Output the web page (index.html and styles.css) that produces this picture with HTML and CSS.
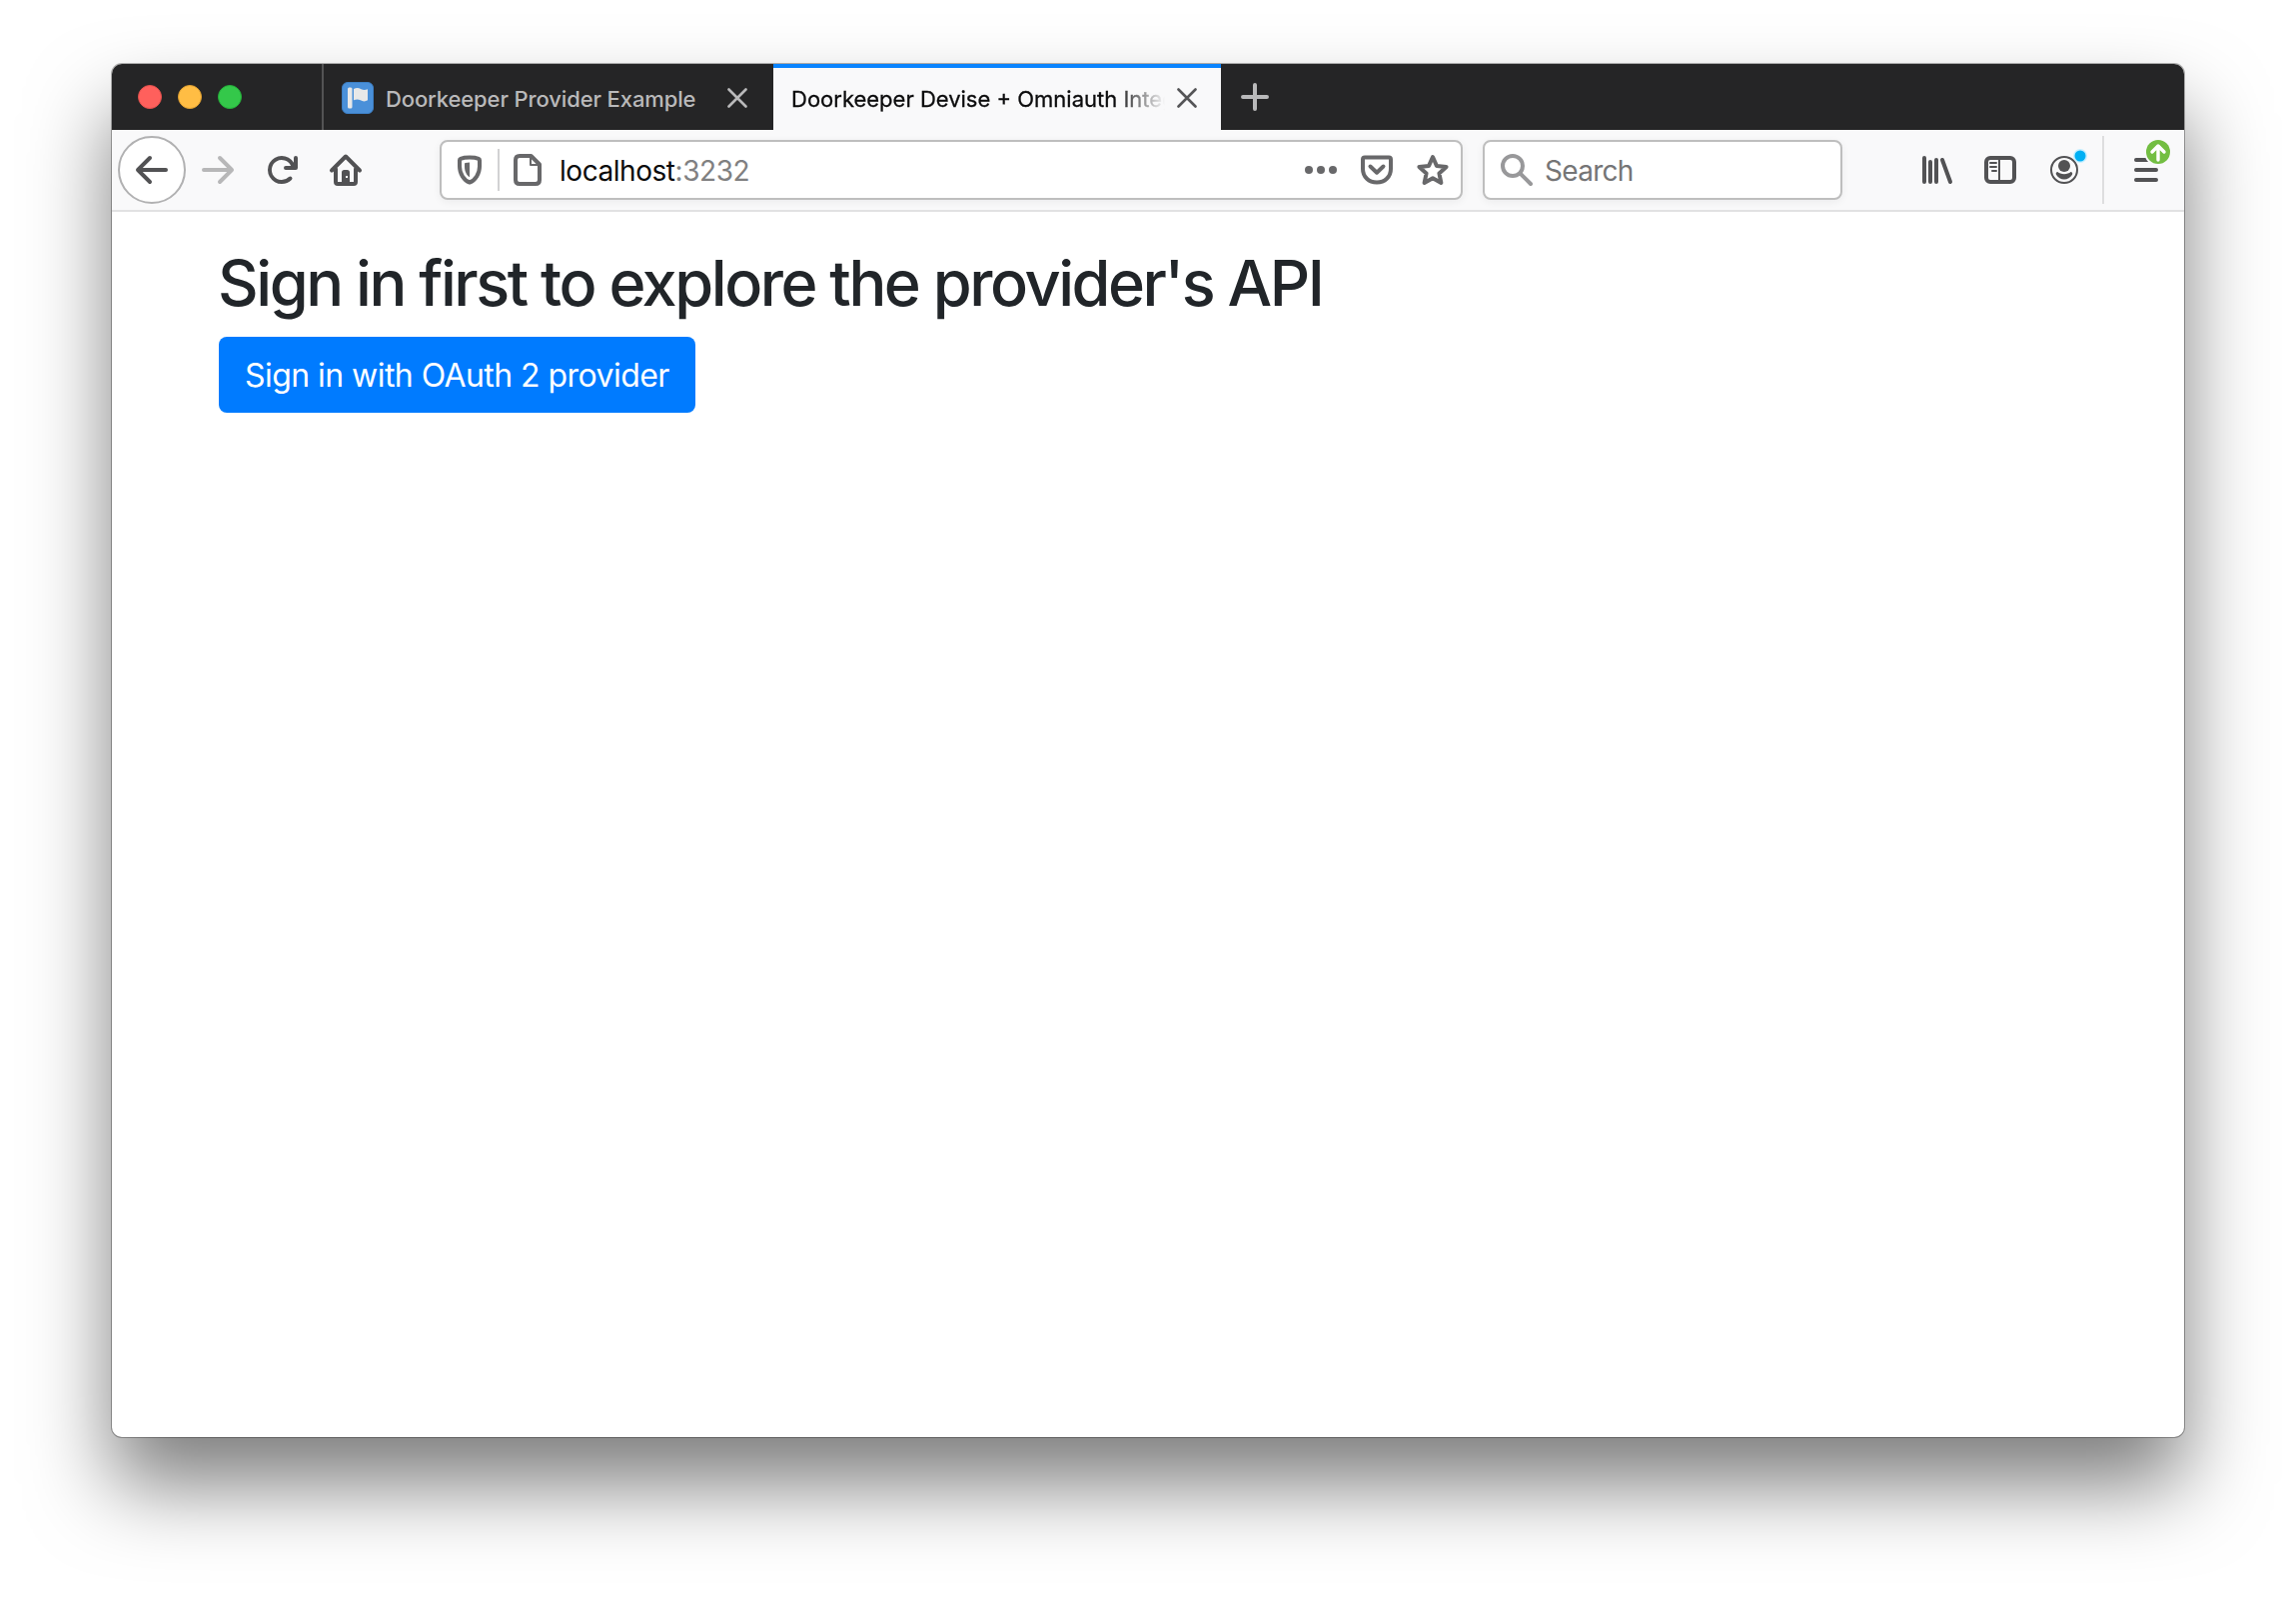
FILE: index.html
```html
<!DOCTYPE html>
<html lang="en">
<head>
<meta charset="utf-8">
<title>Doorkeeper Devise + Omniauth Integration</title>
<link rel="stylesheet" href="styles.css">
</head>
<body>
<div class="window">
  <div class="tabbar">
    <div class="lights"><span class="light red"></span><span class="light yellow"></span><span class="light green"></span></div>
    <div class="tab">
      <svg class="icon favicon" viewBox="0 0 32 32"><rect x=".5" y=".5" width="31" height="31" rx="5.5" fill="#4a90d9" stroke="#3d7fc4"/><rect x="6" y="5.500" width="4.500" height="21" rx="1.500" fill="#e8e8e8"/><path d="M12 7c3-1.500 5-1 7.500.3 2.300 1.200 4.300.9 6.500 0v11c-2.500 1.600-5 1.300-7.200 0-2.300-1.200-4.500-1-6.800 0z" fill="#e8e8e8"/></svg>
      <span class="tab-title">Doorkeeper Provider Example</span>
      <svg class="close" viewBox="0 0 20 20"><path d="M1.500 1.500l17 17M18.500 1.500l-17 17"/></svg>
    </div>
    <div class="tab active">
      <span class="tab-title">Doorkeeper Devise + Omniauth Integration</span>
      <svg class="close" viewBox="0 0 20 20"><path d="M1.500 1.500l17 17M18.500 1.500l-17 17"/></svg>
    </div>
    <svg class="plus" viewBox="0 0 28 28"><path d="M14 2v24M2 14h24"/></svg>
  </div>

  <div class="toolbar">
    <div class="back"><svg class="icon" viewBox="0 0 16 16"><path d="M15 7H3.414l4.293-4.293a1 1 0 0 0-1.414-1.414l-6 6a1 1 0 0 0 0 1.414l6 6a1 1 0 0 0 1.414-1.414L3.414 9H15a1 1 0 0 0 0-2z"/></svg></div>
    <svg class="icon forward" viewBox="0 0 16 16"><path d="M1 9h11.586l-4.293 4.293a1 1 0 0 0 1.414 1.414l6-6a1 1 0 0 0 0-1.414l-6-6a1 1 0 0 0-1.414 1.414L12.586 7H1a1 1 0 0 0 0 2z"/></svg>
    <svg class="icon reload" viewBox="0 0 16 16"><path d="M15 1a1 1 0 0 0-1 1v2.418A6.995 6.995 0 1 0 8 15a6.954 6.954 0 0 0 4.950-2.050 1 1 0 0 0-1.414-1.414A5.019 5.019 0 1 1 12.549 6H10a1 1 0 0 0 0 2h5a1 1 0 0 0 1-1V2a1 1 0 0 0-1-1z"/></svg>
    <svg class="icon home" viewBox="0 0 32 32"><path class="line" d="M2 16.500L16 2.500l14 14M6 15v13q0 2 2 2h16q2 0 2-2V15"/><path fill-rule="evenodd" d="M12 29V18.500q0-2.500 2.500-2.500h3q2.500 0 2.500 2.500V29zM16 22v2h2v-2z"/></svg>

    <div class="urlbar">
      <svg class="icon shield" viewBox="0 0 32 32"><path class="line" d="M16 3.500c3.500 0 7 .5 9 1.300q1 .4 1 1.500v6.200c0 7.500-4.500 14-10 16-5.500-2-10-8.500-10-16V6.300q0-1.100 1-1.500c2-.8 5.500-1.300 9-1.300z"/><path d="M16 8.500v14.800c-3-1.800-5-6-5-10.300V9.800q0-.7.700-.9z"/></svg>
      <span class="divider"></span>
      <svg class="icon page" viewBox="0 0 32 32"><path class="line" d="M8 2h11.500L28 10.500V26q0 4-4 4H8q-4 0-4-4V6q0-4 4-4z"/><path class="thin" d="M19 2v9h9"/></svg>
      <span class="url">localhost<span class="port">:3232</span></span>
      <span class="actions">
        <svg class="icon" viewBox="0 0 32 32"><circle cx="4" cy="16" r="4"/><circle cx="16" cy="16" r="4"/><circle cx="28" cy="16" r="4"/></svg>
        <svg class="icon" viewBox="0 0 32 32"><path class="line" d="M4 3.500h24q2 0 2 2V15c0 8-6 13.500-14 13.500S2 23 2 15V5.500q0-2 2-2z"/><path class="line" d="M9.500 12.500l6.500 6.200 6.500-6.200"/></svg>
        <svg class="icon" viewBox="0 0 32 32"><path class="line" d="M16 3l3.900 8.900 9.700 1-7.200 6.500 2 9.600L16 24.200 7.600 29l2-9.600-7.200-6.500 9.700-1z"/></svg>
      </span>
    </div>

    <div class="search">
      <svg class="icon" viewBox="0 0 32 32"><circle class="line" cx="12" cy="12" r="10"/><path class="line" d="M19.500 19.500L30 30"/></svg>
      <span class="placeholder">Search</span>
    </div>

    <svg class="icon library" viewBox="0 0 32 32"><path class="line" d="M4 4v24M10 8v20M16 6v22M22 6l8 22"/></svg>
    <svg class="icon sidebar" viewBox="0 0 32 32"><rect class="line" x="2" y="4" width="28" height="24" rx="4"/><path class="thin" d="M15 4v24M6 9h6M6 13h6M8 17h4"/></svg>
    <svg class="icon account" viewBox="0 0 32 32"><circle class="thin" cx="16" cy="16" r="13"/><circle cx="16" cy="12" r="6"/><path d="M9.500 18c-1.500 0-2.200 1.500-1.500 2.800 1.800 3 4.700 4.700 8 4.700s6.200-1.700 8-4.700c.7-1.300 0-2.800-1.500-2.800-1.500 1.400-3.700 2.200-6.500 2.200S11 19.400 9.500 18z"/><circle cx="32" cy="2" r="7" fill="#c5efff"/><circle cx="32" cy="2" r="5.500" fill="#00b0f4"/></svg>
    <span class="menu-divider"></span>
    <svg class="icon menu" viewBox="0 0 32 32"><path class="line" d="M6 6h20M6 16h20M6 26h20"/><circle cx="28" cy="-2" r="14" fill="#f9f9fa"/><circle cx="28" cy="-2" r="12" fill="#73be42"/><path d="M28 6V-8M22-2l6-6 6 6" fill="none" stroke="#fff" stroke-width="3.400" stroke-linecap="round" stroke-linejoin="round"/></svg>
  </div>

  <main class="content">
    <h1>Sign in first to explore the provider's API</h1>
    <a class="btn">Sign in with OAuth 2 provider</a>
  </main>
</div>
</body>
</html>
```
FILE: styles.css
```css
* { box-sizing: border-box; }

body {
  margin: 0;
  height: 1598px;
  padding: 64px 112px 160px;
  overflow: hidden;
  background: #fff;
  font-family: Inter, "Liberation Sans", sans-serif;
}

.window {
  height: 1374px;
  border-radius: 10px;
  background: #fff;
  box-shadow: 0 0 0 1px rgba(0, 0, 0, .3), 0 48px 82px rgba(0, 0, 0, .51);
}

.tabbar {
  display: flex;
  align-items: center;
  height: 66px;
  border-radius: 10px 10px 0 0;
  background: #252526;
}

.lights {
  display: flex;
  gap: 16px;
  width: 210px;
  padding-left: 26px;
}

.light {
  width: 24px;
  height: 24px;
  border-radius: 50%;
}
.red { background: #ff605c; border: 1px solid #e2514d; }
.yellow { background: #ffbd44; border: 1px solid #e0a030; }
.green { background: #34c84a; border: 1px solid #25b03a; }

.tab {
  display: flex;
  align-items: center;
  width: 452px;
  height: 66px;
  padding: 2px 26px 0 18px;
  border-left: 2px solid #535354;
  color: #b9b9ba;
  font-size: 22px;
  font-weight: 500;
  letter-spacing: -.12px;
}

.tab.active {
  width: 448px;
  padding-top: 0;
  padding-bottom: 2px;
  padding-right: 24px;
  border-left: 0;
  border-top: 4px solid #0a84ff;
  background: #f9f9fa;
  color: #0c0c0d;
  font-weight: 400;
  letter-spacing: 0;
}

.tab-title {
  flex: 1;
  margin-left: 12px;
  padding-top: 2px;
  overflow: hidden;
  white-space: nowrap;
}
.active .tab-title {
  margin: 0 12px 0 0;
  -webkit-text-stroke: .3px;
  mask-image: linear-gradient(to right, #000 calc(100% - 50px), transparent);
}

.close {
  width: 20px;
  height: 20px;
  fill: none;
  stroke: #b9b9ba;
  stroke-width: 2.600;
  stroke-linecap: round;
}
.active .close { stroke: #555557; }

.plus {
  width: 28px;
  height: 28px;
  margin-left: 20px;
  stroke: #b9b9ba;
  stroke-width: 4;
  stroke-linecap: round;
}

.icon {
  display: block;
  flex: none;
  width: 32px;
  height: 32px;
  overflow: visible;
  fill: #525254;
  color: #525254;
}
.line, .thin {
  fill: none;
  stroke: currentColor;
  stroke-width: 4;
  stroke-linecap: round;
  stroke-linejoin: round;
}
.thin { stroke-width: 2; }

.toolbar {
  display: flex;
  align-items: center;
  height: 82px;
  padding-left: 6px;
  border-bottom: 2px solid #e1e1e2;
  background: #f9f9fa;
}

.back {
  display: grid;
  place-items: center;
  width: 68px;
  height: 68px;
  border: 2px solid #b1b1b2;
  border-radius: 50%;
  background: #fff;
}
.forward { margin-left: 16px; fill: #b7b7b8; }
.reload, .home, .sidebar, .account { margin-left: 32px; }

.urlbar, .search {
  display: flex;
  align-items: center;
  height: 60px;
  border: 2px solid #bebebe;
  border-radius: 8px;
  background: #fff;
  box-shadow: 0 2px 8px rgba(0, 0, 0, .06);
  font-size: 28px;
  letter-spacing: -.45px;
}
.urlbar {
  width: 1024px;
  margin-left: 78px;
  padding: 0 12px;
}
.urlbar .icon { fill: #68686a; color: #68686a; }
.divider {
  width: 2px;
  height: 42px;
  margin: 0 12px;
  background: #d2d2d3;
}
.url {
  margin-left: 16px;
  padding-top: 2px;
  color: #0c0c0d;
}
.port { color: #808081; }
.actions {
  display: flex;
  gap: 24px;
  margin-left: auto;
}

.search {
  width: 360px;
  margin-left: 20px;
  padding-left: 16px;
  color: #757576;
  letter-spacing: -.7px;
}
.search .icon { margin-right: 12px; color: #98989a; }
.placeholder { padding-top: 2px; }

.library { margin-left: 78px; }
.menu-divider {
  width: 2px;
  height: 68px;
  margin-left: 22px;
  background: #dededf;
}
.menu { margin-left: 26px; }

.content {
  padding: 33px 107px;
  color: #212529;
}
h1 {
  margin: 0 0 15px -1px;
  font-size: 63px;
  font-weight: 500;
  line-height: 77px;
  letter-spacing: -2.45px;
  white-space: nowrap;
}
.btn {
  display: inline-block;
  width: 477px;
  height: 76px;
  padding: 1px 0 0 26px;
  border-radius: 8px;
  background: #007bff;
  color: #fff;
  font-size: 32px;
  line-height: 75px;
  letter-spacing: -.55px;
  white-space: nowrap;
}
```
